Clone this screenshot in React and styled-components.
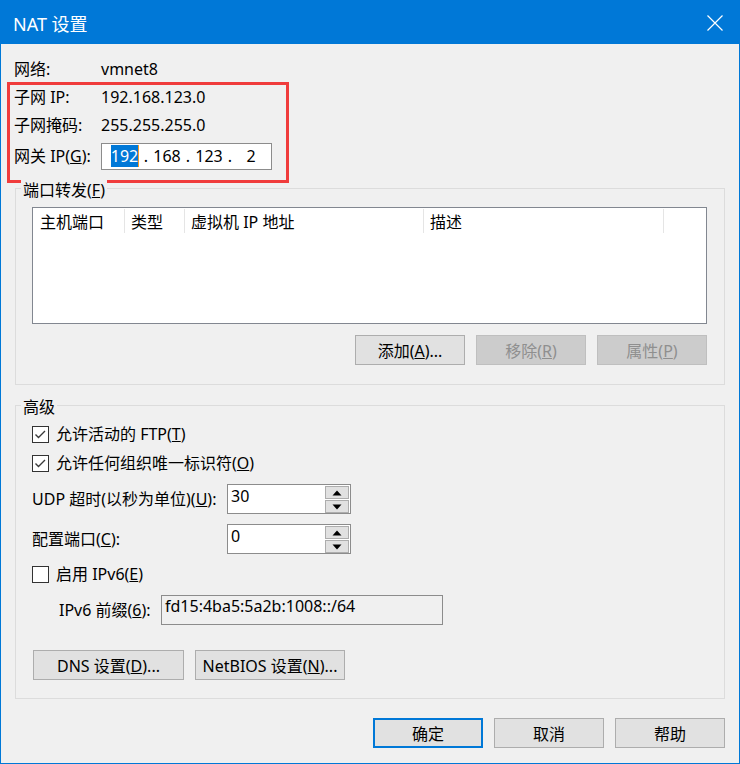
import React from 'react';
import styled, { createGlobalStyle } from 'styled-components';

const GlobalStyle = createGlobalStyle`
  html, body {
    margin: 0;
    padding: 0;
    background: #f0f0f0;
  }
  body {
    font-family: "Noto Sans", "Noto Sans CJK SC", sans-serif;
    font-size: 16px;
    color: #000;
  }
  * {
    box-sizing: border-box;
  }
`;

const Window = styled.div`
  width: 740px;
  height: 764px;
  border: 1px solid #0078d7;
  background: #f0f0f0;
  display: flex;
  flex-direction: column;
`;

const TitleBar = styled.div`
  height: 43px;
  flex: none;
  background: #0078d7;
  color: #fff;
  display: flex;
  align-items: center;
  justify-content: space-between;
  padding: 0 16px 0 12px;
  font-size: 18px;
`;

const Body = styled.div`
  display: flex;
  flex-direction: column;
  padding: 0 13px;
`;

const Info = styled.div`
  position: relative;
  display: grid;
  grid-template-columns: 87px 1fr;
  grid-template-rows: 28px 28px 28px 34px;
  align-items: center;
  padding-top: 11px;
  line-height: 20px;
`;

// red annotation frame drawn over the subnet rows
const Highlight = styled.div`
  position: absolute;
  left: -7px;
  top: 38px;
  width: 282px;
  height: 101px;
  border: 3px solid #f03c3c;
  pointer-events: none;
`;

const IPBox = styled.div`
  width: 171px;
  height: 27px;
  border: 1px solid #8c8c8c;
  background: #fff;
  display: flex;
  align-items: center;
  padding-left: 5px;
`;

const Segment = styled.span`
  width: 36px;
  text-align: center;
  line-height: 16px;
`;

const Dot = styled.span`
  width: 6px;
  text-align: center;
  line-height: 16px;
`;

const Selected = styled.span`
  background: #0078d7;
  color: #fff;
  border-right: 1px solid #f09a2a;
`;

const Group = styled.section`
  position: relative;
  margin: ${p => p.$mt}px 1px 0;
  border: 1px solid #dcdcdc;
  padding: ${p => p.$pad};
  display: flex;
  flex-direction: column;
`;

const GroupTitle = styled.span`
  position: absolute;
  top: -9px;
  left: 5px;
  padding: 0 2px;
  background: #f0f0f0;
  line-height: 20px;
`;

const ListView = styled.div`
  height: 117px;
  border: 1px solid #828790;
  background: #fff;
`;

const ListHeader = styled.div`
  display: flex;
  height: 26px;
`;

const HeaderCell = styled.div`
  width: ${p => p.$w}px;
  height: 24px;
  margin-top: 1px;
  padding-left: ${p => p.$pl || 6}px;
  border-right: 1px solid #e5e5e5;
  display: flex;
  align-items: center;
  white-space: nowrap;
`;

const ButtonRow = styled.div`
  display: flex;
  gap: 11px;
  justify-content: ${p => (p.$end ? 'flex-end' : 'flex-start')};
  margin-top: ${p => p.$mt || 0}px;
  padding: ${p => p.$pad || 0};
`;

const Button = styled.button`
  width: ${p => p.$w || 110}px;
  height: 30px;
  padding: 0;
  font-family: inherit;
  font-size: 16px;
  background: ${p => (p.disabled ? '#cccccc' : '#e1e1e1')};
  border: ${p => (p.$primary ? '2px solid #0078d7' : p.disabled ? '1px solid #bfbfbf' : '1px solid #adadad')};
  color: ${p => (p.disabled ? '#8f8f8f' : '#000')};
  white-space: nowrap;
`;

const CheckRow = styled.label`
  display: flex;
  align-items: center;
  gap: 7px;
  height: 18px;
  flex: none;
  margin-top: ${p => p.$mt || 0}px;
  line-height: 20px;
`;

const Box = styled.span`
  width: 17px;
  height: 17px;
  border: 1px solid #333;
  background: #fff;
  display: inline-flex;
  align-items: center;
  justify-content: center;
  flex: none;
`;

const FieldRow = styled.div`
  display: flex;
  align-items: center;
  height: 30px;
  flex: none;
  margin-top: ${p => p.$mt}px;
  padding-left: ${p => p.$pl || 0}px;
  gap: ${p => p.$gap || 0}px;
  line-height: 20px;
`;

const FieldLabel = styled.span`
  width: ${p => (p.$w ? `${p.$w}px` : 'auto')};
  white-space: nowrap;
`;

const SpinBox = styled.div`
  width: 124px;
  height: 30px;
  border: 1px solid #8c8c8c;
  background: #fff;
  display: flex;
`;

const SpinText = styled.span`
  flex: 1;
  padding: 1px 0 0 3px;
  line-height: 20px;
`;

const SpinButtons = styled.div`
  width: 24px;
  margin-right: 1px;
  padding-top: 1px;
  display: flex;
  flex-direction: column;
  gap: 1px;
`;

const SpinButton = styled.span`
  height: 13px;
  border: 1px solid #adadad;
  background: #e1e1e1;
  display: flex;
  align-items: center;
  justify-content: center;
`;

const PrefixBox = styled.div`
  width: 282px;
  height: 30px;
  border: 1px solid #8c8c8c;
  background: #f0f0f0;
  padding: 0 0 0 3px;
  line-height: 20px;
  align-self: center;
`;

const Check = ({ checked }) => (
  <Box>
    {checked && (
      <svg width="15" height="15" viewBox="0 0 15 15">
        <polyline points="2.5,7.5 5.5,10.5 12,4" fill="none" stroke="#3a3a3a" strokeWidth="1.4" />
      </svg>
    )}
  </Box>
);

const Arrow = ({ down }) => (
  <svg width="10" height="6" viewBox="0 0 10 6">
    <polygon points={down ? '0.5,0.5 9.5,0.5 5,5.5' : '0.5,5.5 9.5,5.5 5,0.5'} fill="#000" />
  </svg>
);

const Spin = ({ value }) => (
  <SpinBox>
    <SpinText>{value}</SpinText>
    <SpinButtons>
      <SpinButton><Arrow /></SpinButton>
      <SpinButton><Arrow down /></SpinButton>
    </SpinButtons>
  </SpinBox>
);

const App = () => (
  <>
    <GlobalStyle />
    <Window>
      <TitleBar>
        <span>NAT 设置</span>
        <svg width="16" height="16" viewBox="0 0 16 16">
          <path d="M0.5 0.5 L15.5 15.5 M15.5 0.5 L0.5 15.5" stroke="#fff" strokeWidth="1.2" />
        </svg>
      </TitleBar>
      <Body>
        <Info>
          <span>网络:</span>
          <span>vmnet8</span>
          <span>子网 IP:</span>
          <span>192.168.123.0</span>
          <span>子网掩码:</span>
          <span>255.255.255.0</span>
          <span>网关 IP(<u>G</u>):</span>
          <IPBox>
            <Segment><Selected>192</Selected></Segment>
            <Dot>.</Dot>
            <Segment>168</Segment>
            <Dot>.</Dot>
            <Segment>123</Segment>
            <Dot>.</Dot>
            <Segment>2</Segment>
          </IPBox>
          <Highlight />
        </Info>

        <Group $mt={15} $pad="18px 17px 19px 16px">
          <GroupTitle>端口转发(<u>F</u>)</GroupTitle>
          <ListView>
            <ListHeader>
              <HeaderCell $w={92} $pl={7}>主机端口</HeaderCell>
              <HeaderCell $w={60}>类型</HeaderCell>
              <HeaderCell $w={239}>虚拟机 IP 地址</HeaderCell>
              <HeaderCell $w={240}>描述</HeaderCell>
            </ListHeader>
          </ListView>
          <ButtonRow $end $mt={11}>
            <Button>添加(<u>A</u>)...</Button>
            <Button disabled>移除(<u>R</u>)</Button>
            <Button disabled>属性(<u>P</u>)</Button>
          </ButtonRow>
        </Group>

        <Group $mt={20} $pad="19px 17px 18px 16px">
          <GroupTitle>高级</GroupTitle>
          <CheckRow>
            <Check checked />
            <span>允许活动的 FTP(<u>T</u>)</span>
          </CheckRow>
          <CheckRow $mt={11}>
            <Check checked />
            <span>允许任何组织唯一标识符(<u>O</u>)</span>
          </CheckRow>
          <FieldRow $mt={12}>
            <FieldLabel $w={195}>UDP 超时(以秒为单位)(<u>U</u>):</FieldLabel>
            <Spin value="30" />
          </FieldRow>
          <FieldRow $mt={10}>
            <FieldLabel $w={195}>配置端口(<u>C</u>):</FieldLabel>
            <Spin value="0" />
          </FieldRow>
          <CheckRow $mt={11}>
            <Check />
            <span>启用 IPv6(<u>E</u>)</span>
          </CheckRow>
          <FieldRow $mt={12} $pl={27} $gap={8}>
            <FieldLabel $w={94}>IPv6 前缀(<u>6</u>):</FieldLabel>
            <PrefixBox>fd15:4ba5:5a2b:1008::/64</PrefixBox>
          </FieldRow>
          <ButtonRow $mt={25} $pad="0 0 0 1px">
            <Button $w={151}>DNS 设置(<u>D</u>)...</Button>
            <Button $w={150}>NetBIOS 设置(<u>N</u>)...</Button>
          </ButtonRow>
        </Group>

        <ButtonRow $end $mt={19} $pad="0 1px 0 0">
          <Button $primary>确定</Button>
          <Button>取消</Button>
          <Button>帮助</Button>
        </ButtonRow>
      </Body>
    </Window>
  </>
);

export default App;
